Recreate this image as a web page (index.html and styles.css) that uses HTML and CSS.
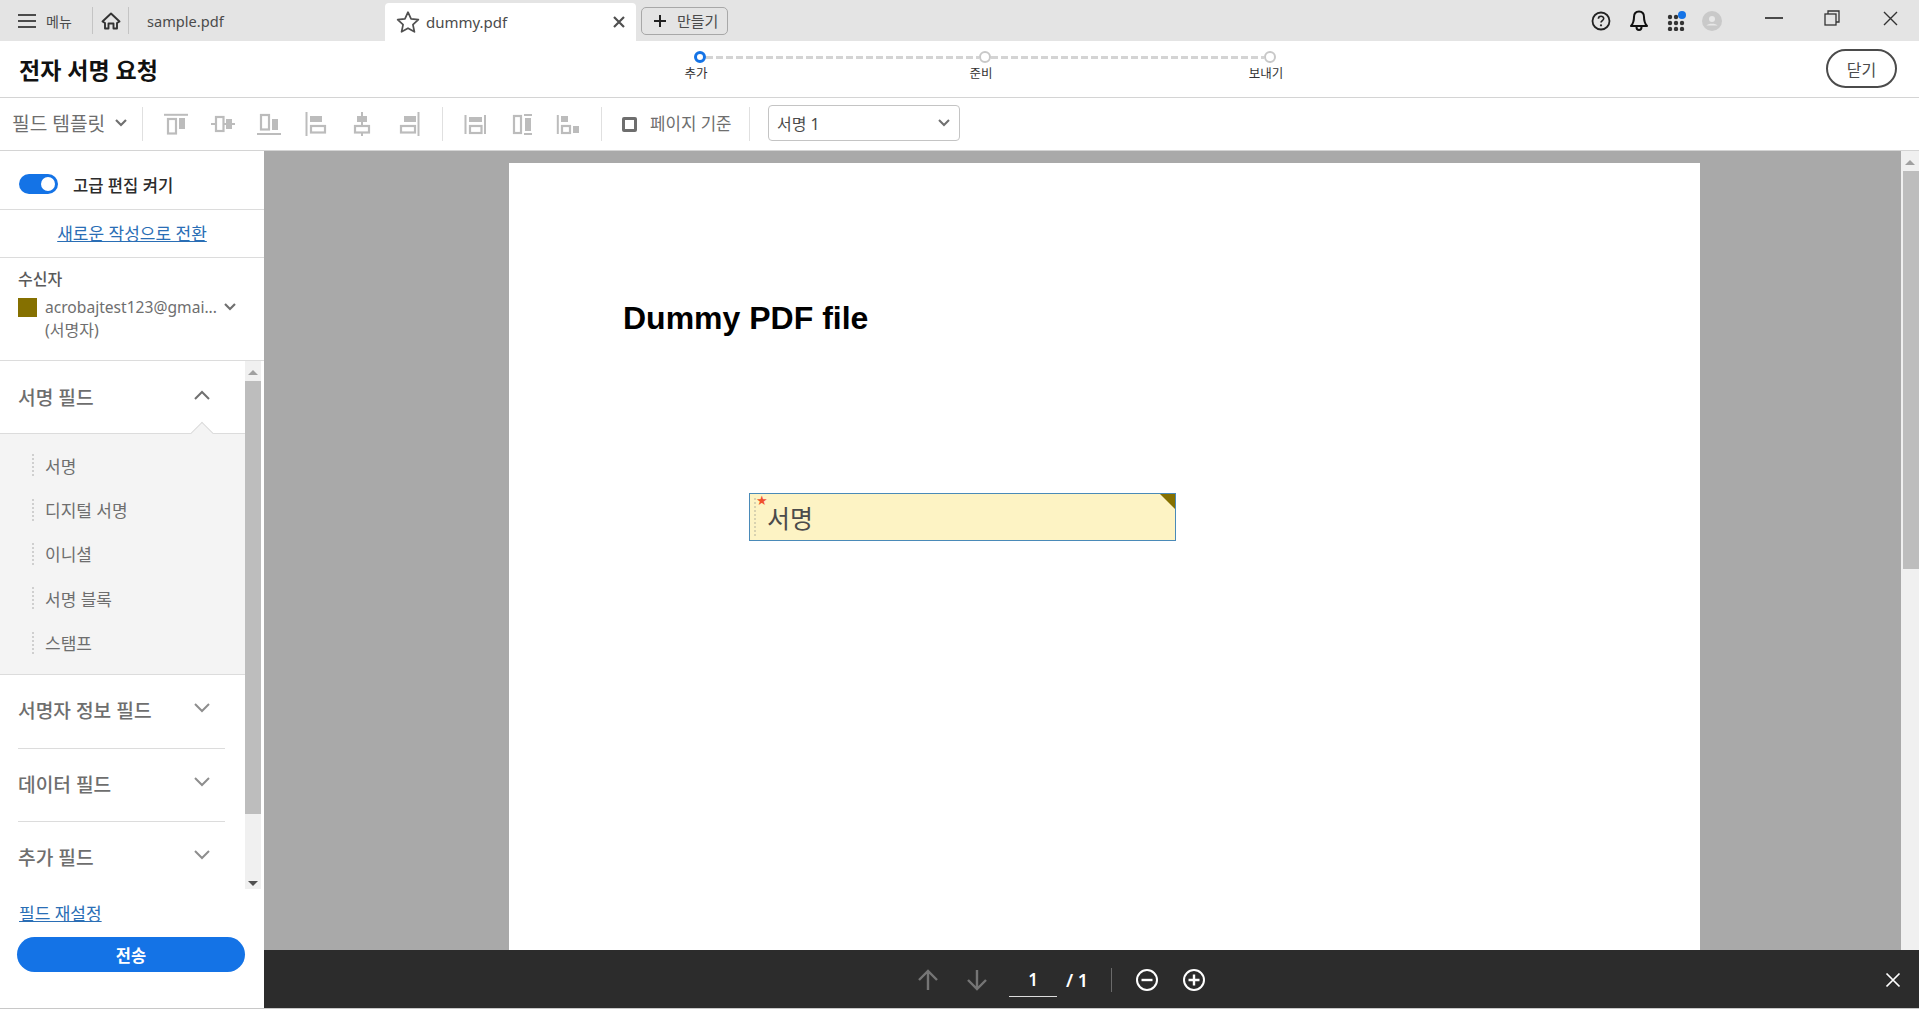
FILE: index.html
```html
<!DOCTYPE html>
<html lang="ko">
<head>
    <meta charset="UTF-8">
    <meta name="viewport" content="width=device-width, initial-scale=1.0">
    <title>전자 서명 요청</title>
    <link rel="stylesheet" href="styles.css">
</head>
<body>
    <!-- tab bar -->
    <div class="tabbar">
        <div class="menu-btn">
            <svg width="18" height="16" viewBox="0 0 18 16"><path d="M0 2h18M0 8h18M0 14h18" stroke="#4b4b4b" stroke-width="2.2"/></svg>
            <span>메뉴</span>
        </div>
        <div class="home-btn">
            <svg width="20" height="20" viewBox="0 0 20 20" fill="none" stroke="#333" stroke-width="1.9" stroke-linejoin="round"><path d="M1.5 10.5L10 2.5l8.5 8-2.5 1.5v5.500h-3.500v-5h-5v5H4V12z"/></svg>
        </div>
        <div class="tab">sample.pdf</div>
        <div class="tab active">
            <svg width="24" height="24" viewBox="0 0 22 22" fill="none" stroke="#505050" stroke-width="1.6" stroke-linejoin="round"><path d="M11 2l2.800 6.200 6.700.7-5 4.500 1.400 6.600L11 16.700 5.100 20l1.400-6.600-5-4.500 6.700-.7z"/></svg>
            <span class="tab-name">dummy.pdf</span>
            <svg class="tab-close" width="12" height="12" viewBox="0 0 12 12"><path d="M1 1l10 10M11 1L1 11" stroke="#505050" stroke-width="2.2"/></svg>
        </div>
        <div class="create-btn">
            <svg width="14" height="14" viewBox="0 0 14 14"><path d="M7 1v12M1 7h12" stroke="#222" stroke-width="2"/></svg>
            <span>만들기</span>
        </div>

        <div class="spacer"></div>

        <div class="status-icon">
            <svg width="20" height="20" viewBox="0 0 20 20" fill="none"><circle cx="10" cy="10" r="8.500" stroke="#222" stroke-width="1.800"/><path d="M7.400 7.800c0-3.300 5.300-3.300 5.300-.2 0 2-2.700 2-2.700 4" stroke="#222" stroke-width="1.600"/><circle cx="10" cy="14.300" r="1.100" fill="#222"/></svg>
        </div>
        <div class="status-icon bell">
            <svg width="20" height="22" viewBox="0 0 20 22" fill="none" stroke="#111" stroke-width="2" stroke-linejoin="round"><path d="M10 1.500c-3.500 0-5 2.500-5 5.500 0 4.500-.8 6.500-3 9h16c-2.200-2.500-3-4.500-3-9 0-3-1.500-5.500-5-5.500z"/><path d="M7.500 17c0 4 5 4 5 0"/></svg>
        </div>
        <div class="status-icon apps">
            <svg width="20" height="20" viewBox="0 0 20 20">
                <g fill="#333">
                    <circle cx="3" cy="6" r="2.200"/><circle cx="9" cy="6" r="2.200"/>
                    <circle cx="3" cy="12" r="2.200"/><circle cx="9" cy="12" r="2.200"/><circle cx="15" cy="12" r="2.200"/>
                    <circle cx="3" cy="18" r="2.200"/><circle cx="9" cy="18" r="2.200"/><circle cx="15" cy="18" r="2.200"/>
                </g>
                <circle cx="15" cy="4" r="4" fill="#1473e6"/>
            </svg>
        </div>
        <div class="status-icon avatar-slot">
            <svg width="20" height="20" viewBox="0 0 20 20"><circle cx="10" cy="10" r="10" fill="#c9c9c9"/><circle cx="10" cy="8" r="3" fill="#e8e8e8"/><path d="M4.500 14.500c1.500-2.500 9.500-2.500 11 0z" fill="#e8e8e8"/></svg>
        </div>
        <div class="win-btn">
            <svg width="18" height="2" viewBox="0 0 18 2"><path d="M0 1h18" stroke="#222" stroke-width="1.600"/></svg>
        </div>
        <div class="win-btn">
            <svg width="16" height="16" viewBox="0 0 16 16" fill="none" stroke="#333" stroke-width="1.300"><rect x="1" y="4" width="11" height="11"/><path d="M4 4V1h11v11h-3"/></svg>
        </div>
        <div class="win-btn">
            <svg width="15" height="15" viewBox="0 0 15 15"><path d="M1 1l13 13M14 1L1 14" stroke="#333" stroke-width="1.400"/></svg>
        </div>
    </div>

    <!-- title + steps -->
    <div class="header">
        <h1 class="page-title">전자 서명 요청</h1>
        <div class="stepper">
            <div class="step current"><i class="step-dot"></i><span>추가</span></div>
            <div class="step-line"></div>
            <div class="step"><i class="step-dot"></i><span>준비</span></div>
            <div class="step-line"></div>
            <div class="step"><i class="step-dot"></i><span>보내기</span></div>
        </div>
        <button class="close-btn">닫기</button>
    </div>

    <!-- field tools -->
    <div class="toolbar">
        <div class="template-btn">
            <span>필드 템플릿</span>
            <svg width="14" height="10" viewBox="0 0 14 10" fill="none"><path d="M2 2l5 5 5-5" stroke="#707070" stroke-width="2.2"/></svg>
        </div>
        <div class="tool-group first">
            <div class="tool"><svg width="24" height="24" viewBox="0 0 24 24"><path d="M0 2.800h24" class="ln"/><rect x="4" y="7" width="8" height="14.500" class="out"/><rect x="15" y="6" width="6" height="11" class="fil"/></svg></div>
            <div class="tool"><svg width="24" height="24" viewBox="0 0 24 24"><path d="M0 12h4M13 12h2M21 12h3" class="ln"/><rect x="5" y="5" width="7.500" height="14" class="out"/><rect x="15" y="7" width="6" height="10" class="fil"/></svg></div>
            <div class="tool"><svg width="24" height="24" viewBox="0 0 24 24"><path d="M0 22h24" class="ln"/><rect x="4" y="3" width="8" height="14.500" class="out"/><rect x="15" y="7" width="6" height="11" class="fil"/></svg></div>
            <div class="tool"><svg width="24" height="24" viewBox="0 0 24 24"><path d="M2.500 0v24" class="ln"/><rect x="6" y="4" width="12" height="6" class="fil"/><rect x="7" y="14" width="14" height="6.500" class="out"/></svg></div>
            <div class="tool"><svg width="24" height="24" viewBox="0 0 24 24"><path d="M12 0v4M12 10v4M12 21v3" class="ln"/><rect x="7" y="4" width="10" height="6" class="fil"/><rect x="5" y="14" width="14" height="6.500" class="out"/></svg></div>
            <div class="tool"><svg width="24" height="24" viewBox="0 0 24 24"><path d="M21.500 0v24" class="ln"/><rect x="7" y="4" width="12" height="6" class="fil"/><rect x="4" y="14" width="14" height="6.500" class="out"/></svg></div>
        </div>
        <div class="tool-group second">
            <div class="tool"><svg width="24" height="24" viewBox="0 0 24 24"><path d="M2.500 3v19M22 3v19" class="ln"/><rect x="6" y="5" width="13" height="5" class="fil"/><rect x="7" y="14" width="11.500" height="7" class="out"/></svg></div>
            <div class="tool"><svg width="24" height="24" viewBox="0 0 24 24"><rect x="4" y="4" width="7" height="17" class="out"/><path d="M14 3h8M14 22h8" class="ln"/><rect x="15" y="6" width="6" height="13" class="fil"/></svg></div>
            <div class="tool"><svg width="24" height="24" viewBox="0 0 24 24"><path d="M1.800 3v19" class="ln"/><rect x="5" y="4" width="7" height="6" class="fil"/><rect x="6" y="14" width="8" height="7" class="out"/><rect x="17" y="14" width="6" height="7" class="fil"/></svg></div>
        </div>
        <div class="page-basis">
            <i class="checkbox"></i>
            <span>페이지 기준</span>
        </div>
        <div class="select-box">
            <span>서명 1</span>
            <svg width="14" height="10" viewBox="0 0 14 10" fill="none"><path d="M2 2l5 5 5-5" stroke="#707070" stroke-width="2"/></svg>
        </div>
    </div>

    <div class="workspace">
        <aside class="sidebar">
            <div class="toggle-row">
                <i class="switch"></i>
                <span>고급 편집 켜기</span>
            </div>
            <div class="switch-row"><a href="#">새로운 작성으로 전환</a></div>
            <div class="recipient">
                <div class="recipient-title">수신자</div>
                <div class="recipient-line">
                    <i class="swatch"></i>
                    <span class="recipient-mail">acrobajtest123@gmai...</span>
                    <svg width="14" height="10" viewBox="0 0 14 10" fill="none"><path d="M2 2l5 5 5-5" stroke="#707070" stroke-width="2.2"/></svg>
                </div>
                <div class="recipient-role">(서명자)</div>
            </div>

            <div class="fields">
                <div class="field-list">
                    <div class="field-head open">
                        <span>서명 필드</span>
                        <svg width="20" height="12" viewBox="0 0 20 12" fill="none"><path d="M3 10l7-7 7 7" stroke="#707070" stroke-width="2"/></svg>
                    </div>
                    <ul class="field-items">
                        <li>서명</li>
                        <li>디지털 서명</li>
                        <li>이니셜</li>
                        <li>서명 블록</li>
                        <li>스탬프</li>
                    </ul>
                    <div class="field-head">
                        <span>서명자 정보 필드</span>
                        <svg width="20" height="12" viewBox="0 0 20 12" fill="none"><path d="M3 2l7 7 7-7" stroke="#8e8e8e" stroke-width="2"/></svg>
                    </div>
                    <div class="field-head">
                        <span>데이터 필드</span>
                        <svg width="20" height="12" viewBox="0 0 20 12" fill="none"><path d="M3 2l7 7 7-7" stroke="#8e8e8e" stroke-width="2"/></svg>
                    </div>
                    <div class="field-head">
                        <span>추가 필드</span>
                        <svg width="20" height="12" viewBox="0 0 20 12" fill="none"><path d="M3 2l7 7 7-7" stroke="#8e8e8e" stroke-width="2"/></svg>
                    </div>
                </div>
                <div class="side-scroll">
                    <i class="arrow-up"></i>
                    <div class="side-thumb"></div>
                    <i class="arrow-down"></i>
                </div>
            </div>

            <div class="side-footer">
                <a href="#">필드 재설정</a>
                <button class="send-btn">전송</button>
            </div>
        </aside>

        <main class="main">
            <div class="viewer">
                <div class="canvas">
                    <div class="page">
                        <div class="pdf-title">Dummy PDF file</div>
                        <div class="sign-field">
                            <span class="star">★</span>
                            <span class="sign-label">서명</span>
                        </div>
                    </div>
                </div>
                <div class="page-scroll">
                    <i class="arrow-up"></i>
                    <div class="page-thumb"></div>
                </div>
            </div>
            <div class="pagebar">
                <svg width="24" height="24" viewBox="0 0 24 24" fill="none" stroke="#757575" stroke-width="2.4"><path d="M12 22V3M3 12l9-9 9 9"/></svg>
                <svg class="next" width="24" height="24" viewBox="0 0 24 24" fill="none" stroke="#757575" stroke-width="2.4"><path d="M12 2v19M3 12l9 9 9-9"/></svg>
                <div class="page-input">1</div>
                <div class="page-total">/ 1</div>
                <i class="bar-sep"></i>
                <svg class="zoom-out" width="24" height="24" viewBox="0 0 24 24" fill="none" stroke="#fff" stroke-width="2"><circle cx="12" cy="12" r="10"/><path d="M6.500 12h11" stroke-width="2.4"/></svg>
                <svg class="zoom-in" width="24" height="24" viewBox="0 0 24 24" fill="none" stroke="#fff" stroke-width="2"><circle cx="12" cy="12" r="10"/><path d="M6.500 12h11M12 6.500v11" stroke-width="2.4"/></svg>
                <svg class="bar-close" width="16" height="16" viewBox="0 0 16 16"><path d="M1.500 1.500l13 13M14.500 1.500l-13 13" stroke="#fff" stroke-width="1.7"/></svg>
            </div>
        </main>
    </div>
</body>
</html>
```

FILE: styles.css
```css
:root {
    --blue: #1473e6;
    --link: #2a6eb5;
    --gray-text: #6e6e6e;
    --line: #dcdcdc;
    --olive: #857000;
}

* {
    box-sizing: border-box;
}

html, body {
    height: 100%;
}

body {
    margin: 0;
    display: flex;
    flex-direction: column;
    overflow: hidden;
    font-family: "Noto Sans", "Noto Sans CJK KR", sans-serif;
    color: #2c2c2c;
    background: #fff;
}

i {
    display: block;
}

/* tab bar */
.tabbar {
    height: 41px;
    flex: none;
    display: flex;
    align-items: center;
    background: #e4e4e4;
}

.menu-btn {
    width: 93px;
    height: 27px;
    padding-left: 18px;
    display: flex;
    align-items: center;
    gap: 10px;
    font-size: 14px;
    color: #4b4b4b;
    border-right: 1px solid #c4c4c4;
}

.home-btn {
    width: 36px;
    height: 27px;
    display: flex;
    align-items: center;
    justify-content: center;
    border-right: 1px solid #c4c4c4;
}

.tab {
    width: 256px;
    padding-left: 18px;
    font-size: 14.6px;
    color: #4b4b4b;
}

.tab.active {
    width: 251px;
    height: 38px;
    margin-top: 3px;
    padding: 0 11px;
    display: flex;
    align-items: center;
    gap: 6px;
    font-size: 15px;
    background: #fff;
    border-radius: 4px 4px 0 0;
}

.tab-name {
    flex: 1;
}

.create-btn {
    width: 87px;
    height: 28px;
    margin-left: 5px;
    padding-left: 11px;
    display: flex;
    align-items: center;
    gap: 10px;
    font-size: 15px;
    color: #4b4b4b;
    border: 1px solid #a8a8a8;
    border-radius: 5px;
}

.spacer {
    flex: 1;
}

.status-icon {
    width: 37px;
    display: flex;
    justify-content: center;
}

.status-icon.bell {
    padding-left: 2px;
}

.status-icon.apps {
    padding-left: 3px;
}

.avatar-slot {
    margin-right: 13px;
}

.win-btn {
    width: 58.5px;
    height: 38px;
    padding: 0 0 5px 2px;
    display: flex;
    align-items: center;
    justify-content: center;
}

/* header */
.header {
    height: 57px;
    flex: none;
    display: flex;
    background: #fff;
    border-bottom: 1px solid #d4d4d4;
}

.page-title {
    width: 694px;
    margin: 0;
    padding-left: 19px;
    font-size: 23px;
    font-weight: 700;
    line-height: 58px;
    color: #111;
}

.stepper {
    width: 582px;
    margin-top: 10px;
    display: flex;
}

.step {
    width: 12px;
    display: flex;
    flex-direction: column;
    align-items: center;
}

.step span {
    margin-top: 3px;
    margin-right: 8px;
    font-size: 12.5px;
    line-height: 16px;
    white-space: nowrap;
    color: #333;
}

.step-dot {
    width: 12px;
    height: 12px;
    flex: none;
    background: #fff;
    border: 2.5px solid #c8c8c8;
    border-radius: 50%;
}

.step.current .step-dot {
    border: 3.5px solid var(--blue);
}

.step-line {
    flex: 1;
    height: 3px;
    margin-top: 4.5px;
    background: repeating-linear-gradient(90deg, #d4d4d4 0 7px, transparent 7px 10px);
}

.close-btn {
    width: 71px;
    height: 39px;
    margin: 8px 22px 0 auto;
    font-family: inherit;
    font-size: 16px;
    color: #4b4b4b;
    background: #fff;
    border: 2px solid #4b4b4b;
    border-radius: 20px;
}

/* toolbar */
.toolbar {
    height: 53px;
    flex: none;
    display: flex;
    align-items: center;
    border-bottom: 1px solid #d4d4d4;
}

.template-btn {
    width: 143px;
    height: 34px;
    padding: 0 0 2px 12px;
    display: flex;
    align-items: center;
    gap: 9px;
    font-size: 19.2px;
    white-space: nowrap;
    color: var(--gray-text);
    border-right: 1px solid #e0e0e0;
}

.tool-group {
    height: 34px;
    display: flex;
    align-items: center;
    border-right: 1px solid #e0e0e0;
}

.tool-group.first {
    width: 300px;
    padding-left: 10px;
}

.tool-group.second {
    width: 159px;
    padding-left: 9px;
}

.tool {
    width: 46.5px;
    display: flex;
    justify-content: center;
}

.tool svg {
    display: block;
}

.ln {
    stroke: #bcbcbc;
    stroke-width: 2;
    fill: none;
}

.out {
    stroke: #bcbcbc;
    stroke-width: 2.2;
    fill: none;
}

.fil {
    fill: #bcbcbc;
}

.page-basis {
    width: 148px;
    height: 34px;
    padding: 0 0 2px 20px;
    display: flex;
    align-items: center;
    gap: 13px;
    font-size: 16.8px;
    white-space: nowrap;
    color: var(--gray-text);
    border-right: 1px solid #e0e0e0;
}

.checkbox {
    width: 15px;
    height: 15px;
    margin-top: 2px;
    border: 3px solid #6e6e6e;
    border-radius: 2px;
}

.select-box {
    width: 192px;
    height: 36px;
    margin: 0 0 2px 18px;
    padding: 0 8px;
    display: flex;
    align-items: center;
    justify-content: space-between;
    font-size: 16px;
    color: #4b4b4b;
    border: 1px solid #c4c4c4;
    border-radius: 4px;
}

/* workspace */
.workspace {
    flex: 1;
    min-height: 0;
    display: flex;
    border-bottom: 1px solid #c8c8c8;
}

.sidebar {
    width: 264px;
    flex: none;
    display: flex;
    flex-direction: column;
}

.toggle-row {
    height: 59px;
    flex: none;
    padding: 10px 0 0 19px;
    display: flex;
    align-items: center;
    gap: 15px;
    font-size: 16.6px;
    font-weight: 500;
    border-bottom: 1px solid var(--line);
}

.switch {
    width: 39px;
    height: 20px;
    margin-top: -2px;
    display: flex;
    justify-content: flex-end;
    padding: 3px;
    background: var(--blue);
    border-radius: 10px;
}

.switch::after {
    content: "";
    width: 14px;
    height: 14px;
    background: #fff;
    border-radius: 50%;
}

.switch-row {
    height: 48px;
    flex: none;
    padding-bottom: 2px;
    display: flex;
    align-items: center;
    justify-content: center;
    font-size: 17px;
    border-bottom: 1px solid var(--line);
}

a {
    color: var(--link);
}

.recipient {
    height: 103px;
    flex: none;
    padding: 10px 18px 0;
    font-size: 16px;
    color: var(--gray-text);
    border-bottom: 1px solid var(--line);
}

.recipient-title {
    margin-bottom: 5px;
    font-weight: 500;
    line-height: 22px;
    color: #5a5a5a;
}

.recipient-line {
    display: flex;
    align-items: center;
    line-height: 24px;
}

.swatch {
    width: 19px;
    height: 19px;
    flex: none;
    background: var(--olive);
}

.recipient-mail {
    width: 178px;
    margin-left: 8px;
    flex: none;
    font-size: 15.6px;
    white-space: nowrap;
}

.recipient-role {
    margin-left: 27px;
    line-height: 22px;
}

.fields {
    height: 528px;
    flex: none;
    display: flex;
}

.field-list {
    width: 245px;
    flex: none;
    overflow: hidden;
}

.field-head {
    position: relative;
    height: 73.5px;
    padding: 0 33px 3px 18px;
    display: flex;
    align-items: center;
    justify-content: space-between;
    font-size: 19.2px;
    font-weight: 500;
    color: var(--gray-text);
}

.field-head svg {
    margin-bottom: 4px;
}

/* inset rule between the collapsed groups */
.field-head + .field-head::before {
    content: "";
    position: absolute;
    left: 18px;
    top: -1px;
    width: 207px;
    height: 1px;
    background: var(--line);
}

.field-head.open {
    height: 73px;
    padding-bottom: 0;
    border-bottom: 1px solid var(--line);
}

.field-head.open::after {
    content: "";
    position: absolute;
    left: 194px;
    bottom: -8px;
    width: 15px;
    height: 15px;
    background: #f4f4f4;
    border: solid var(--line);
    border-width: 1px 0 0 1px;
    transform: rotate(45deg);
}

.field-items {
    height: 241px;
    margin: 0;
    padding: 9px 0 0 27px;
    list-style: none;
    background: #f4f4f4;
    border-bottom: 1px solid var(--line);
}

.field-items li {
    height: 44.4px;
    padding-left: 18px;
    display: flex;
    align-items: center;
    font-size: 17px;
    color: var(--gray-text);
    background: repeating-linear-gradient(180deg, #cfcfcf 0 2px, transparent 2px 4px) 5px center / 2px 22px no-repeat;
}

.side-scroll {
    width: 16px;
    flex: none;
    display: flex;
    flex-direction: column;
    align-items: center;
    background: #f0f0f0;
}

.side-thumb {
    width: 16px;
    height: 433px;
    margin: 6px 0 auto;
    background: #bdbdbd;
}

.arrow-up,
.arrow-down {
    width: 0;
    height: 0;
    margin-top: 9px;
    border-left: 5px solid transparent;
    border-right: 5px solid transparent;
    border-bottom: 5px solid #a0a0a0;
}

.arrow-down {
    margin: 0 0 3px;
    border-bottom: 0;
    border-top: 5px solid #505050;
}

.side-footer {
    flex: 1;
    padding: 15px 19px 0 17px;
    font-size: 17px;
    line-height: 20px;
}

.side-footer a {
    margin-left: 2px;
}

.send-btn {
    display: block;
    width: 228px;
    height: 35px;
    margin-top: 13px;
    font-family: inherit;
    font-size: 16.5px;
    font-weight: 700;
    color: #fff;
    background: var(--blue);
    border: 0;
    border-radius: 18px;
}

/* document viewer */
.main {
    flex: 1;
    min-width: 0;
    display: flex;
    flex-direction: column;
}

.viewer {
    flex: 1;
    min-height: 0;
    display: flex;
}

.canvas {
    flex: 1;
    padding: 12px 0 0 245px;
    overflow: hidden;
    background: #a9a9a9;
}

.page {
    width: 1191px;
    height: 1200px;
    padding: 135px 0 0 114px;
    background: #fff;
}

.pdf-title {
    font-family: "Liberation Sans", Arial, sans-serif;
    font-size: 32px;
    font-weight: 700;
    line-height: 40px;
    color: #000;
}

.sign-field {
    position: relative;
    width: 427px;
    height: 48px;
    margin: 155px 0 0 126px;
    padding-left: 17px;
    display: flex;
    align-items: center;
    background: #fdf3c4 repeating-linear-gradient(180deg, #d8d2b0 0 2px, transparent 2px 4px) 4px center / 2px 38px no-repeat;
    border: 1px solid #4a8ab8;
}

.sign-field::after {
    content: "";
    position: absolute;
    top: 0;
    right: 0;
    border-top: 15px solid var(--olive);
    border-left: 15px solid transparent;
}

.star {
    position: absolute;
    left: 6px;
    top: 2px;
    font-family: "DejaVu Sans", sans-serif;
    font-size: 13px;
    line-height: 10px;
    color: #f0502d;
}

.sign-label {
    margin-top: 2px;
    font-size: 25px;
    line-height: 24px;
    color: #4b4b4b;
}

.page-scroll {
    width: 18px;
    flex: none;
    display: flex;
    flex-direction: column;
    align-items: center;
    background: #f0f0f0;
}

.page-thumb {
    width: 16px;
    height: 398px;
    margin: 6px 0 0 2px;
    background: #bdbdbd;
}

.pagebar {
    height: 58px;
    flex: none;
    padding: 2px 0 0 652px;
    display: flex;
    align-items: center;
    color: #fff;
    background: #2c2c2c;
}

.next {
    margin-left: 25px;
}

.page-input {
    width: 48px;
    height: 33px;
    margin: 1px 0 0 20px;
    padding-top: 1px;
    font-size: 17px;
    font-weight: 600;
    line-height: 30px;
    text-align: center;
    border-bottom: 1px solid #ddd;
}

.page-total {
    width: 42px;
    margin-left: 9px;
    font-size: 18px;
    font-weight: 600;
}

.bar-sep {
    width: 1px;
    height: 24px;
    margin-left: 3px;
    background: #6a6a6a;
}

.zoom-out {
    margin-left: 23px;
}

.zoom-in {
    margin-left: 23px;
}

.bar-close {
    margin-left: auto;
    margin-right: 18px;
}
```
